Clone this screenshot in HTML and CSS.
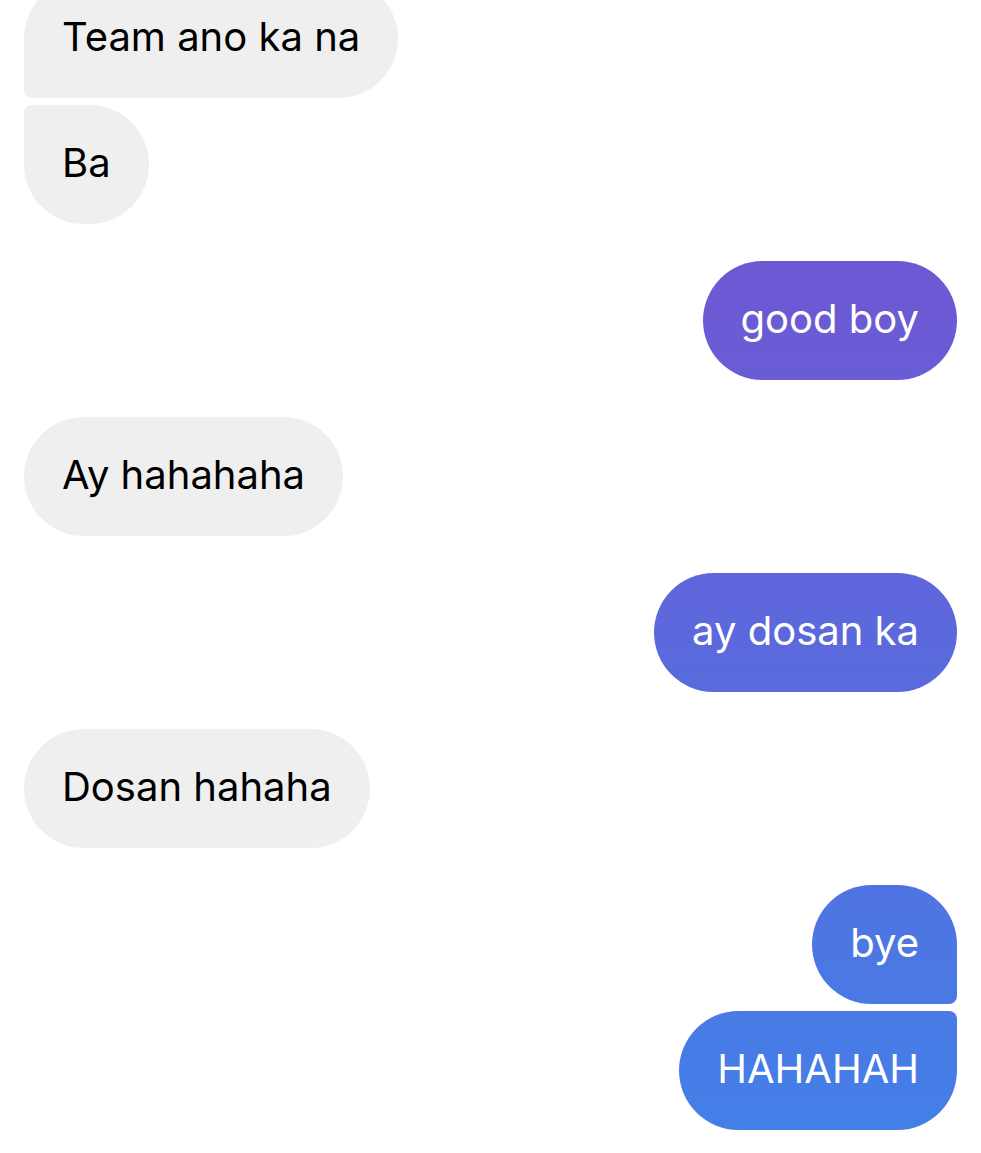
FILE: index.html
```html
<!DOCTYPE html>
<html>
  <head>
    <title>Chat</title>
    <meta charset="UTF-8">
    <meta name="viewport" content="width=device-width, initial-scale=1.0">
    <link rel="stylesheet" href="styles.css">
  </head>
  <body>

    <!--Messages-->
    <div class="thread">

      <div class="group">
        <div class="bubble them first">Team ano ka na</div>
        <div class="bubble them last">Ba</div>
      </div>

      <div class="group">
        <div class="bubble me">good boy</div>
      </div>

      <div class="group">
        <div class="bubble them">Ay hahahaha</div>
      </div>

      <div class="group">
        <div class="bubble me">ay dosan ka</div>
      </div>

      <div class="group">
        <div class="bubble them">Dosan hahaha</div>
      </div>

      <div class="group">
        <div class="bubble me first">bye</div>
        <div class="bubble me last">HAHAHAH</div>
      </div>

    </div>

  </body>
</html>
```

FILE: styles.css
```css
html, body {
  margin: 0;
  padding: 0;
  background-color: #fff;
  font-family: Inter, "Noto Sans", sans-serif;
}

.thread {
  display: flex;
  flex-direction: column;
  gap: 37px;
  padding: 0 24px;
  margin-top: -21px;
}

.group {
  display: flex;
  flex-direction: column;
  gap: 7px;
}

.bubble {
  box-sizing: border-box;
  height: 119px;
  line-height: 115px;
  padding: 0 38px 4px 38px;
  font-size: 40px;
  border-radius: 60px;
  white-space: nowrap;
}

.them {
  align-self: flex-start;
  background-color: #efefef;
  color: #000;
}

/* messenger gradient, fixed to the screen */
.me {
  align-self: flex-end;
  color: #fff;
  background-image: linear-gradient(to bottom, #7b4ccd 0px, #4280e8 1153px);
  background-attachment: fixed;
}

.them.first {
  border-bottom-left-radius: 8px;
}

.them.last {
  border-top-left-radius: 8px;
}

.me.first {
  border-bottom-right-radius: 8px;
}

.me.last {
  border-top-right-radius: 8px;
}
```
